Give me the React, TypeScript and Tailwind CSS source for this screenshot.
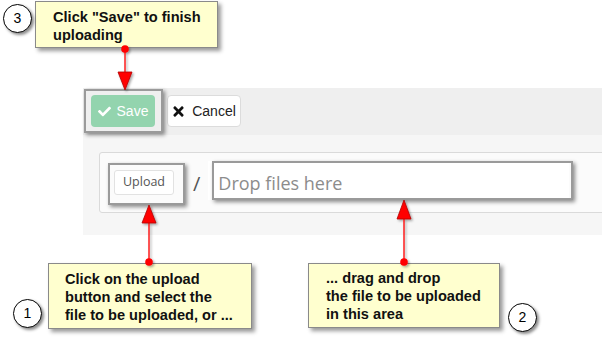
import React from "react";
import { FaCheck, FaTimes } from "react-icons/fa";

function Circle({ n, cls }: { n: string; cls: string }) {
  return (
    <div
      className={`absolute flex h-[29px] w-[29px] items-center justify-center rounded-full border-[1.5px] border-black bg-white text-[14px] text-black shadow-[2px_2px_3px_rgba(0,0,0,0.45)] ${cls}`}
      style={{ fontFamily: '"Liberation Sans", Arial, sans-serif' }}
    >
      {n}
    </div>
  );
}

export default function App() {
  const callout =
    "absolute border border-[#8a8a8a] bg-[#ffffcf] text-[14.6px] font-bold leading-[18px] text-[#111] shadow-[3px_3px_4px_rgba(0,0,0,0.4)]";
  const frame =
    "absolute border-2 border-[#9a9a9a] shadow-[2px_2px_4px_rgba(0,0,0,0.45)]";
  return (
    <div
      className="relative h-[340px] w-[602px] overflow-hidden bg-white"
      style={{ fontFamily: '"Liberation Sans", Arial, sans-serif' }}
    >
      {/* UI panel */}
      <div className="ml-[83px] mt-[88px] w-[519px]">
        <div className="flex h-[47px] items-start gap-[12px] bg-[#efefef] px-[8px] pt-[7px]">
          <button className="flex h-[32px] w-[64px] items-center justify-center gap-[6px] rounded-[4px] bg-[#93d4ae] text-[14px] text-white">
            <FaCheck className="h-[13px] w-[13px]" />
            <span>Save</span>
          </button>
          <button className="flex h-[32px] w-[74px] items-center justify-center gap-[7px] rounded-[4px] border border-[#dcdcdc] bg-white text-[14px] text-[#222]">
            <FaTimes className="h-[15px] w-[13px] text-[#111]" />
            <span>Cancel</span>
          </button>
        </div>
        <div className="h-[100px] bg-[#f6f6f6] pl-[16px] pt-[17px]">
          <div
            className="flex h-[61px] w-[540px] items-start rounded-l-[3px] border border-[#dadada] bg-[#fbfbfb] pl-[14px]"
            style={{ fontFamily: '"Open Sans", sans-serif' }}
          >
            <div className="mt-[17px] flex h-[25px] w-[60px] items-center justify-center rounded-[3px] border border-[#e2e2e2] bg-white text-[12.5px] text-[#555]">
              Upload
            </div>
            <div className="ml-[19px] mt-[18px] text-[20px] leading-[26px] text-[#555]">/</div>
            <div className="ml-[8px] mt-[8px] flex h-[39px] w-[361px] items-center bg-white pl-[10px] pt-[5px] text-[18px] text-[#8c8c8c]">
              Drop files here
            </div>
          </div>
        </div>
      </div>

      {/* highlight frames */}
      <div className={`${frame} left-[84px] top-[89px] h-[44px] w-[79px]`} />
      <div className={`${frame} left-[108px] top-[163px] h-[42px] w-[77px]`} />
      <div className={`${frame} left-[212px] top-[161px] h-[39px] w-[361px]`} />

      {/* callouts */}
      <div className={`${callout} left-[35px] top-[1px] h-[47px] w-[183px] pl-[17px] pt-[6px]`}>
        Click "Save" to finish
        <br />
        uploading
      </div>
      <Circle n="3" cls="left-[3px] top-[4px]" />

      <div className={`${callout} left-[48px] top-[263px] h-[66px] w-[204px] pl-[16px] pt-[6px]`}>
        Click on the upload
        <br />
        button and select the
        <br />
        file to be uploaded, or ...
      </div>
      <Circle n="1" cls="left-[13px] top-[299px]" />

      <div className={`${callout} left-[308px] top-[263px] h-[65px] w-[192px] pl-[17px] pt-[5px]`}>
        ... drag and drop
        <br />
        the file to be uploaded
        <br />
        in this area
      </div>
      <Circle n="2" cls="left-[508px] top-[303px]" />

      {/* arrows */}
      <svg
        className="pointer-events-none absolute left-0 top-0"
        width="602"
        height="340"
        viewBox="0 0 602 340"
      >
        <defs>
          <filter id="sh" x="-50%" y="-50%" width="200%" height="200%">
            <feDropShadow dx="1.5" dy="1.5" stdDeviation="1" floodColor="#000" floodOpacity="0.35" />
          </filter>
        </defs>
        <g filter="url(#sh)">
          <line x1="125" y1="49" x2="125" y2="74" stroke="#ff0000" strokeWidth="1.3" />
          <polygon points="118,72 132,72 125,90" fill="#ff0000" stroke="#b00000" strokeWidth="0.8" />
          <circle cx="125" cy="49" r="3.8" fill="#ff0000" />

          <line x1="149" y1="262" x2="149" y2="222" stroke="#ff0000" strokeWidth="1.3" />
          <polygon points="142,223 156,223 149,205" fill="#ff0000" stroke="#b00000" strokeWidth="0.8" />
          <circle cx="149" cy="262" r="3.8" fill="#ff0000" />

          <line x1="404" y1="262" x2="404" y2="218" stroke="#ff0000" strokeWidth="1.3" />
          <polygon points="397,219 411,219 404,200" fill="#ff0000" stroke="#b00000" strokeWidth="0.8" />
          <circle cx="404" cy="262" r="3.8" fill="#ff0000" />
        </g>
      </svg>
    </div>
  );
}
